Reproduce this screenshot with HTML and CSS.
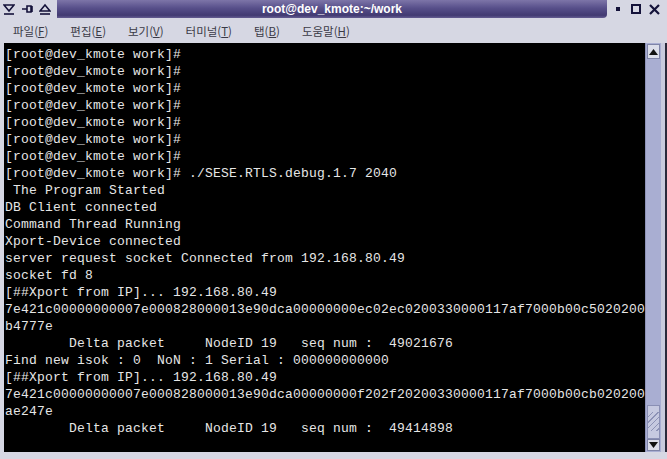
FILE: index.html
```html
<!DOCTYPE html>
<html lang="ko">
<head>
    <meta charset="UTF-8">
    <title>root@dev_kmote:~/work</title>
    <link rel="stylesheet" href="styles.css">
</head>
<body>
    <div class="window">
        <div class="titlebar">
            <div class="tb-left">
                <svg width="12" height="12" viewBox="0 0 12 12"><path d="M1 2 H11 L6 8 Z" fill="none" stroke="#14123a" stroke-width="1.6"/><path d="M1 11 H11" stroke="#14123a" stroke-width="1.6"/></svg>
                <svg width="12" height="12" viewBox="0 0 12 12"><path d="M1 6 H6 M6 3 H10 V9 H6 Z M11 3 V9" fill="none" stroke="#14123a" stroke-width="1.6"/></svg>
                <svg width="12" height="12" viewBox="0 0 12 12"><path d="M1 8 H11 L6 2 Z" fill="none" stroke="#14123a" stroke-width="1.6"/><path d="M1 11 H11" stroke="#14123a" stroke-width="1.6"/></svg>
            </div>
            <div class="tb-title">root@dev_kmote:~/work</div>
            <div class="tb-right">
                <svg width="10" height="10" viewBox="0 0 10 10"><rect x="3" y="3" width="4" height="4" fill="#14123a"/></svg>
                <svg width="10" height="10" viewBox="0 0 10 10"><rect x="1" y="1" width="8" height="8" fill="none" stroke="#14123a" stroke-width="2"/></svg>
                <svg width="11" height="11" viewBox="0 0 11 11"><path d="M1 1 L10 10 M10 1 L1 10" stroke="#14123a" stroke-width="2.2"/></svg>
            </div>
        </div>

        <div class="menubar">
            <span class="menu-item">파일(<u>F</u>)</span>
            <span class="menu-item">편집(<u>E</u>)</span>
            <span class="menu-item">보기(<u>V</u>)</span>
            <span class="menu-item">터미널(<u>T</u>)</span>
            <span class="menu-item">탭(<u>B</u>)</span>
            <span class="menu-item">도움말(<u>H</u>)</span>
        </div>

        <div class="main">
            <pre class="terminal">[root@dev_kmote work]#
[root@dev_kmote work]#
[root@dev_kmote work]#
[root@dev_kmote work]#
[root@dev_kmote work]#
[root@dev_kmote work]#
[root@dev_kmote work]#
[root@dev_kmote work]# ./SESE.RTLS.debug.1.7 2040
 The Program Started
DB Client connected
Command Thread Running
Xport-Device connected
server request socket Connected from 192.168.80.49
socket fd 8
[##Xport from IP]... 192.168.80.49
7e421c00000000007e000828000013e90dca00000000ec02ec0200330000117af7000b00c5020200
b4777e
        Delta packet     NodeID 19   seq num :  49021676
Find new isok : 0  NoN : 1 Serial : 000000000000
[##Xport from IP]... 192.168.80.49
7e421c00000000007e000828000013e90dca00000000f202f20200330000117af7000b00cb020200
ae247e
        Delta packet     NodeID 19   seq num :  49414898</pre>
            <div class="scrollbar">
                <div class="sb-btn">
                    <svg width="9" height="6" viewBox="0 0 9 6"><path d="M0 6 L4.5 0 L9 6 Z" fill="#111"/></svg>
                </div>
                <div class="sb-trough">
                    <div class="sb-thumb"></div>
                </div>
                <div class="sb-btn">
                    <svg width="9" height="6" viewBox="0 0 9 6"><path d="M0 0 L4.5 6 L9 0 Z" fill="#111"/></svg>
                </div>
            </div>
            <div class="frame-right"></div>
        </div>
    </div>
</body>
</html>
```

FILE: styles.css
```css
body {
    margin: 0;
    padding: 0;
    background-color: #d6d7e3;
    font-family: "Noto Sans CJK KR", "Noto Sans", sans-serif;
}

.window {
    width: 667px;
    height: 459px;
    overflow: hidden;
    background-color: #d6d7e3;
}

.titlebar {
    display: flex;
    height: 18px;
}

.tb-left {
    width: 57px;
    display: flex;
    align-items: center;
    gap: 6px;
    padding-left: 3px;
    box-sizing: border-box;
}

.tb-title {
    flex: 1;
    background: linear-gradient(#7d75a8, #574f8a 45%, #423a72 85%, #655d92);
    border-radius: 0 0 4px 0;
    color: #fff;
    font-family: "Liberation Sans", sans-serif;
    font-weight: bold;
    font-size: 12px;
    line-height: 18px;
    text-align: center;
}

.tb-right {
    width: 60px;
    display: flex;
    align-items: center;
    justify-content: flex-end;
    gap: 8px;
    padding-right: 7px;
    box-sizing: border-box;
}

.menubar {
    height: 25px;
    display: flex;
    align-items: center;
    gap: 22px;
    padding-left: 13px;
    font-size: 11.5px;
    color: #3a3a46;
}

.menu-item u {
    text-decoration-thickness: 1px;
}

.main {
    display: flex;
    height: 409px;
    padding-left: 4px;
}

.terminal {
    width: 641px;
    height: 409px;
    margin: 0;
    padding: 3px 0 0 1px;
    box-sizing: border-box;
    background-color: #000;
    color: #e6e6e6;
    font-family: "Liberation Mono", monospace;
    font-size: 13px;
    letter-spacing: 0.2px;
    line-height: 17px;
    overflow: hidden;
    white-space: pre;
}

.scrollbar {
    width: 16px;
    display: flex;
    flex-direction: column;
    background-color: #a9aed2;
    border-left: 1px solid #8e93b8;
    box-sizing: border-box;
}

.sb-btn {
    height: 13px;
    display: flex;
    align-items: center;
    justify-content: center;
    background-color: #dcdeea;
    border: 1px solid #7f84a8;
    margin: 1px 1px 0 1px;
}

.sb-btn:last-child {
    margin: 0 1px 1px 1px;
    height: 10px;
}

.sb-trough {
    flex: 1;
    display: flex;
    flex-direction: column;
    justify-content: flex-end;
}

.sb-thumb {
    height: 32px;
    margin: 0 1px;
    background-color: #c6c9e0;
    border: 1px solid #8a8fb4;
    background-image: repeating-linear-gradient(135deg, transparent 0 3px, #8d92b6 3px 4px);
    background-size: 100% 60%;
    background-position: center;
    background-repeat: no-repeat;
}

.frame-right {
    width: 6px;
    background-color: #c9cbdd;
    border-right: 2px solid #2a2a3a;
    box-sizing: border-box;
}
```
